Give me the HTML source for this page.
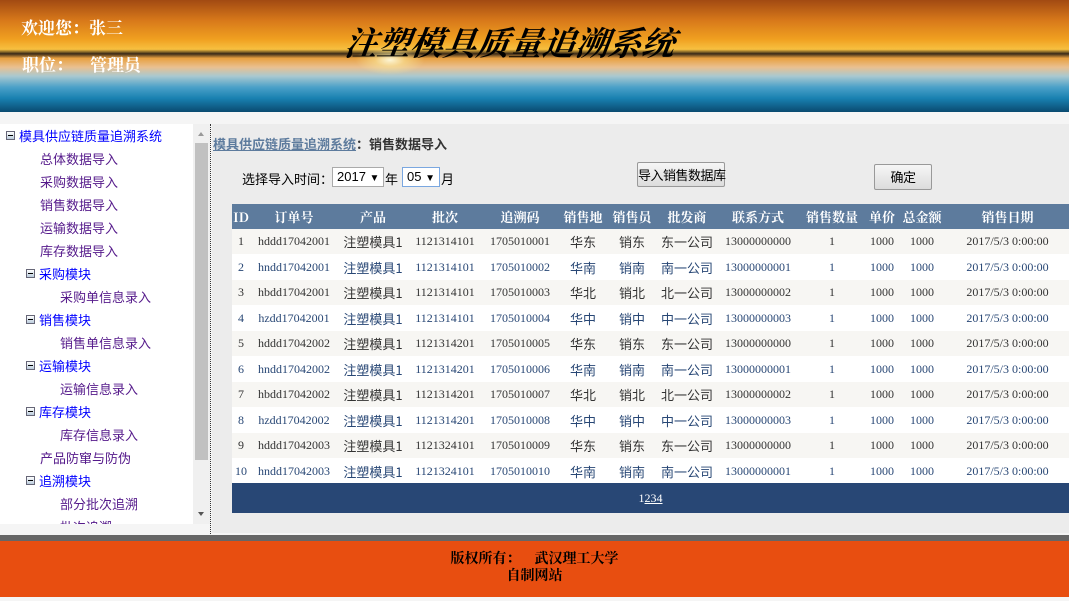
<!DOCTYPE html>
<html><head><meta charset="utf-8"><style>
*{margin:0;padding:0;box-sizing:border-box}
body{width:1069px;height:601px;overflow:hidden;background:#f5f5f5;font-family:"Liberation Serif","Noto Serif CJK SC","Noto Sans CJK SC",serif;font-size:12px;position:relative}
#hd{position:absolute;left:0;top:0;width:1069px;height:112px;background:linear-gradient(180deg,#a24a12 0%,#d7781a 18%,#f0a020 35%,#f7c040 44%,#3a2a18 48%,#e8a040 52%,#e9c090 60%,#a9c8d0 68%,#4aa0c8 78%,#1880b0 88%,#0a4a70 100%);}
#sun{position:absolute;left:355px;top:45px;width:70px;height:30px;background:radial-gradient(ellipse at center,rgba(255,255,230,.9) 0%,rgba(255,240,160,.5) 30%,rgba(255,200,80,0) 70%)}
.hw{position:absolute;color:#fff;font-size:17px;font-weight:bold;font-family:"Noto Serif CJK SC",serif}
#title{position:absolute;left:345px;top:18px;font-size:33px;font-style:italic;color:#000;font-family:"Noto Serif CJK SC",serif;font-weight:bold;transform:skewX(-8deg)}
#side{position:absolute;left:0;top:124px;width:193px;height:400px;background:#fff;overflow:hidden}
#side div{position:absolute;font-size:13px;white-space:nowrap;font-family:"Noto Sans CJK SC",sans-serif}
.b{color:#00f}.p{color:#551a8b}
.box{display:inline-block;width:9px;height:9px;border:1px solid #667;background:linear-gradient(#fff,#bcd);position:relative;vertical-align:1px;margin-right:4px}
.box:after{content:"";position:absolute;left:1px;top:3px;width:5px;height:1px;background:#000}
#sb{position:absolute;left:193px;top:124px;width:17px;height:400px;background:#f0f0f0}
#thumb{position:absolute;left:195px;top:143px;width:13px;height:317px;background:#c1c1c1}
#dot{position:absolute;left:210px;top:124px;height:410px;border-left:1px dotted #333}
#main{position:absolute;left:212px;top:124px;width:857px;height:409px;background:#ececec}
table{position:absolute;left:232px;top:204px;width:837px;border-collapse:collapse;table-layout:fixed}
td,th{height:25px;text-align:center;font-size:12px;white-space:nowrap;overflow:hidden;padding:0}
th{background:#5d7b9d;color:#fff;font-weight:bold;height:25px;font-size:13px;font-family:"Noto Serif CJK SC",serif}
tr.o td{background:#f7f6f3;color:#333;height:25px}
tr.e td{background:#fff;color:#284775;height:26px}
td.c{font-family:"Noto Sans CJK SC",sans-serif;font-size:13px}
#pg{position:absolute;left:232px;top:483px;width:837px;height:30px;background:#284775;color:#fff;font-size:12px;text-align:center;line-height:30px}
#gb{position:absolute;left:0;top:535px;width:1069px;height:6px;background:#666}
#ft{position:absolute;left:0;top:541px;width:1069px;height:56px;background:#e84e10;text-align:center;font-weight:bold;font-size:14px;color:#000;padding-top:9px;line-height:17px;font-family:"Noto Serif CJK SC",serif}
.btn{position:absolute;background:linear-gradient(#f6f6f6,#dcdcdc);border:1px solid #999;border-radius:2px;font-size:13px;text-align:center;white-space:nowrap;font-family:"Noto Sans CJK SC",sans-serif;letter-spacing:-0.5px}
.sel{position:absolute;background:#fff;border:1px solid #aaa;font-size:13px;font-family:"Liberation Sans",sans-serif;padding-left:4px;line-height:18px}
</style></head><body>
<div id="hd"><div id="sun"></div>
<div class="hw" style="left:21px;top:14px">欢迎您：张三</div>
<div class="hw" style="left:22px;top:51px">职位：&nbsp;&nbsp;&nbsp;&nbsp;管理员</div>
<div id="title">注塑模具质量追溯系统</div></div>
<div id="side">
<div class="b" style="left:6px;top:2px"><span class="box"></span>模具供应链质量追溯系统</div>
<div class="p" style="left:40px;top:25px">总体数据导入</div>
<div class="p" style="left:40px;top:48px">采购数据导入</div>
<div class="p" style="left:40px;top:71px">销售数据导入</div>
<div class="p" style="left:40px;top:94px">运输数据导入</div>
<div class="p" style="left:40px;top:117px">库存数据导入</div>
<div class="b" style="left:26px;top:140px"><span class="box"></span>采购模块</div>
<div class="p" style="left:60px;top:163px">采购单信息录入</div>
<div class="b" style="left:26px;top:186px"><span class="box"></span>销售模块</div>
<div class="p" style="left:60px;top:209px">销售单信息录入</div>
<div class="b" style="left:26px;top:232px"><span class="box"></span>运输模块</div>
<div class="p" style="left:60px;top:255px">运输信息录入</div>
<div class="b" style="left:26px;top:278px"><span class="box"></span>库存模块</div>
<div class="p" style="left:60px;top:301px">库存信息录入</div>
<div class="p" style="left:40px;top:324px">产品防窜与防伪</div>
<div class="b" style="left:26px;top:347px"><span class="box"></span>追溯模块</div>
<div class="p" style="left:60px;top:370px">部分批次追溯</div>
<div class="p" style="left:60px;top:393px">批次追溯</div>
</div>
<div id="sb"><div style="position:absolute;left:5px;top:8px;border:3px solid transparent;border-bottom:4px solid #999;border-top:0"></div><div style="position:absolute;left:5px;top:388px;border:3px solid transparent;border-top:4px solid #555;border-bottom:0"></div></div>
<div id="thumb"></div>
<div id="dot"></div>
<div id="main">
<div style="position:absolute;left:1px;top:10px;font-size:13px;font-weight:bold;font-family:'Noto Sans CJK SC',sans-serif"><span style="color:#5d7b9d;text-decoration:underline">模具供应链质量追溯系统</span><span style="color:#333">：销售数据导入</span></div>
<div style="position:absolute;left:30px;top:45px;font-size:13px;font-family:'Noto Sans CJK SC',sans-serif;color:#000">选择导入时间：</div>
<div class="sel" style="left:120px;top:43px;width:52px;height:20px">2017 <span style="font-size:10px">▼</span></div>
<div style="position:absolute;left:173px;top:45px;font-size:13px;font-family:'Noto Sans CJK SC',sans-serif">年</div>
<div class="sel" style="left:190px;top:43px;width:38px;height:20px;border-color:#7aa7e0">05 <span style="font-size:10px">▼</span></div>
<div style="position:absolute;left:229px;top:45px;font-size:13px;font-family:'Noto Sans CJK SC',sans-serif">月</div>
<div class="btn" style="left:425px;top:38px;width:88px;height:25px;line-height:23px">导入销售数据库</div>
<div class="btn" style="left:662px;top:40px;width:58px;height:26px;line-height:24px">确定</div>
</div>
<table>
<colgroup><col style="width:18px"><col style="width:88px"><col style="width:70px"><col style="width:74px"><col style="width:76px"><col style="width:50px"><col style="width:48px"><col style="width:62px"><col style="width:80px"><col style="width:68px"><col style="width:32px"><col style="width:48px"><col style="width:123px"></colgroup>
<tr><th>ID</th><th>订单号</th><th>产品</th><th>批次</th><th>追溯码</th><th>销售地</th><th>销售员</th><th>批发商</th><th>联系方式</th><th>销售数量</th><th>单价</th><th>总金额</th><th>销售日期</th></tr>
<tr class="o"><td>1</td><td>hddd17042001</td><td class="c">注塑模具1</td><td>1121314101</td><td>1705010001</td><td class="c">华东</td><td class="c">销东</td><td class="c">东一公司</td><td>13000000000</td><td>1</td><td>1000</td><td>1000</td><td>2017/5/3 0:00:00</td></tr>
<tr class="e"><td>2</td><td>hndd17042001</td><td class="c">注塑模具1</td><td>1121314101</td><td>1705010002</td><td class="c">华南</td><td class="c">销南</td><td class="c">南一公司</td><td>13000000001</td><td>1</td><td>1000</td><td>1000</td><td>2017/5/3 0:00:00</td></tr>
<tr class="o"><td>3</td><td>hbdd17042001</td><td class="c">注塑模具1</td><td>1121314101</td><td>1705010003</td><td class="c">华北</td><td class="c">销北</td><td class="c">北一公司</td><td>13000000002</td><td>1</td><td>1000</td><td>1000</td><td>2017/5/3 0:00:00</td></tr>
<tr class="e"><td>4</td><td>hzdd17042001</td><td class="c">注塑模具1</td><td>1121314101</td><td>1705010004</td><td class="c">华中</td><td class="c">销中</td><td class="c">中一公司</td><td>13000000003</td><td>1</td><td>1000</td><td>1000</td><td>2017/5/3 0:00:00</td></tr>
<tr class="o"><td>5</td><td>hddd17042002</td><td class="c">注塑模具1</td><td>1121314201</td><td>1705010005</td><td class="c">华东</td><td class="c">销东</td><td class="c">东一公司</td><td>13000000000</td><td>1</td><td>1000</td><td>1000</td><td>2017/5/3 0:00:00</td></tr>
<tr class="e"><td>6</td><td>hndd17042002</td><td class="c">注塑模具1</td><td>1121314201</td><td>1705010006</td><td class="c">华南</td><td class="c">销南</td><td class="c">南一公司</td><td>13000000001</td><td>1</td><td>1000</td><td>1000</td><td>2017/5/3 0:00:00</td></tr>
<tr class="o"><td>7</td><td>hbdd17042002</td><td class="c">注塑模具1</td><td>1121314201</td><td>1705010007</td><td class="c">华北</td><td class="c">销北</td><td class="c">北一公司</td><td>13000000002</td><td>1</td><td>1000</td><td>1000</td><td>2017/5/3 0:00:00</td></tr>
<tr class="e"><td>8</td><td>hzdd17042002</td><td class="c">注塑模具1</td><td>1121314201</td><td>1705010008</td><td class="c">华中</td><td class="c">销中</td><td class="c">中一公司</td><td>13000000003</td><td>1</td><td>1000</td><td>1000</td><td>2017/5/3 0:00:00</td></tr>
<tr class="o"><td>9</td><td>hddd17042003</td><td class="c">注塑模具1</td><td>1121324101</td><td>1705010009</td><td class="c">华东</td><td class="c">销东</td><td class="c">东一公司</td><td>13000000000</td><td>1</td><td>1000</td><td>1000</td><td>2017/5/3 0:00:00</td></tr>
<tr class="e"><td>10</td><td>hndd17042003</td><td class="c">注塑模具1</td><td>1121324101</td><td>1705010010</td><td class="c">华南</td><td class="c">销南</td><td class="c">南一公司</td><td>13000000001</td><td>1</td><td>1000</td><td>1000</td><td>2017/5/3 0:00:00</td></tr>
</table>
<div id="pg">1<u>2</u><u>3</u><u>4</u></div>
<div id="gb"></div>
<div id="ft">版权所有：&nbsp;&nbsp;&nbsp;&nbsp;武汉理工大学<br>自制网站</div>
</body></html>
